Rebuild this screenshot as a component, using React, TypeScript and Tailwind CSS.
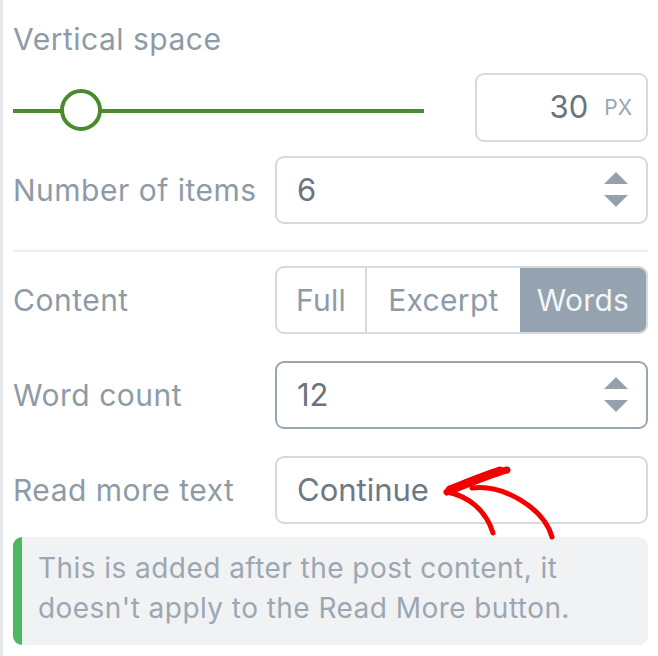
import type { ReactNode } from 'react'

const font = { fontFamily: 'Inter, "Noto Sans", sans-serif' }

function Label({ children }: { children: ReactNode }) {
  return <div className="w-[262px] shrink-0 text-[30px] leading-none tracking-[0.5px] text-[#8e9ba7]">{children}</div>
}

function Spinner() {
  return (
    <svg width="24" height="36" viewBox="0 0 24 36" className="shrink-0">
      <path d="M12 0 L24 12 L0 12 Z" fill="#94a1ad" />
      <path d="M0 23 L24 23 L12 35 Z" fill="#94a1ad" />
    </svg>
  )
}

function NumberBox({ value, focused }: { value: string; focused?: boolean }) {
  return (
    <div
      className={
        focused
          ? 'flex h-[68px] flex-1 items-center justify-between rounded-[9px] border-2 border-[#9aa7b2] pl-[20px] pr-[18px]'
          : 'flex h-[68px] flex-1 items-center justify-between rounded-[9px] border-2 border-[#d5dadf] pl-[20px] pr-[18px]'
      }
    >
      <span className="text-[31px] text-[#6b747d]">{value}</span>
      <Spinner />
    </div>
  )
}

export default function App() {
  return (
    <div className="relative h-[656px] w-[658px] overflow-hidden bg-white" style={font}>
      <div className="h-full border-l-[3px] border-[#e6e9ec] pl-[10px] pr-[10px] pt-[24px]">
        {/* vertical space */}
        <div className="text-[30px] leading-[30px] tracking-[0.5px] text-[#8e9ba7]">Vertical space</div>

        <div className="mt-[19px] flex h-[69px] items-center gap-[51px]">
          <div className="relative flex h-full flex-1 items-center pt-[6px]">
            <div className="h-[4px] w-full bg-[#4b8b2f]" />
            <div className="absolute left-[47px] top-[16px] h-[42px] w-[42px] rounded-full border-[4px] border-[#4b8b2f] bg-white" />
          </div>
          <div className="flex h-full w-[173px] items-center justify-end gap-[16px] rounded-[9px] border-2 border-[#d5dadf] pr-[14px]">
            <span className="text-[31px] text-[#6b747d]">30</span>
            <span className="text-[21px] text-[#9da6af]">PX</span>
          </div>
        </div>

        <div className="mt-[14px] flex items-center">
          <Label>Number of items</Label>
          <NumberBox value="6" />
        </div>

        <div className="mt-[26px] h-[2px] bg-[#eceeef]" />

        {/* content */}
        <div className="mt-[14px] flex items-center">
          <Label>Content</Label>
          <div className="flex h-[68px] flex-1 overflow-hidden rounded-[9px] border-2 border-[#d5dadf] text-[30px] tracking-[0.3px]">
            <div className="flex w-[90px] items-center justify-center border-r-2 border-[#d5dadf] text-[#8e9ba7]">Full</div>
            <div className="flex w-[153px] items-center justify-center text-[#8e9ba7]">Excerpt</div>
            <div className="flex flex-1 items-center justify-center bg-[#94a3af] text-[#f3f5f6]">Words</div>
          </div>
        </div>

        <div className="mt-[27px] flex items-center">
          <Label>Word count</Label>
          <NumberBox value="12" focused />
        </div>

        <div className="mt-[27px] flex items-center">
          <Label>Read more text</Label>
          <div className="flex h-[68px] flex-1 items-center rounded-[9px] border-2 border-[#d5dadf] pl-[20px]">
            <span className="text-[31px] text-[#6d7882]">Continue</span>
          </div>
        </div>

        {/* note */}
        <div className="mt-[13px] flex h-[108px] overflow-hidden rounded-[9px] bg-[#f1f2f3]">
          <div className="w-[9px] shrink-0 bg-[#4cb862]" />
          <p className="pl-[16px] pr-[50px] pt-[11px] text-[28px] leading-[40px] tracking-[0.45px] text-[#9ba7b2]">
            This is added after the post content, it doesn't apply to the Read More button.
          </p>
        </div>
      </div>

      {/* hand-drawn annotation arrow */}
      <svg className="pointer-events-none absolute left-0 top-0" width="658" height="656" viewBox="0 0 658 656">
        <g fill="none" stroke="#f50000" strokeLinecap="round" strokeLinejoin="round">
          <path d="M507 470 C 486 474 462 484 447 492" strokeWidth="7" />
          <path d="M500 471 C 485 476 465 484 450 490" strokeWidth="9" />
          <path d="M447 492 C 468 496 486 510 493 533" strokeWidth="5" />
          <path d="M472 488 C 503 484 544 508 552 537" strokeWidth="5" />
        </g>
      </svg>
    </div>
  )
}
